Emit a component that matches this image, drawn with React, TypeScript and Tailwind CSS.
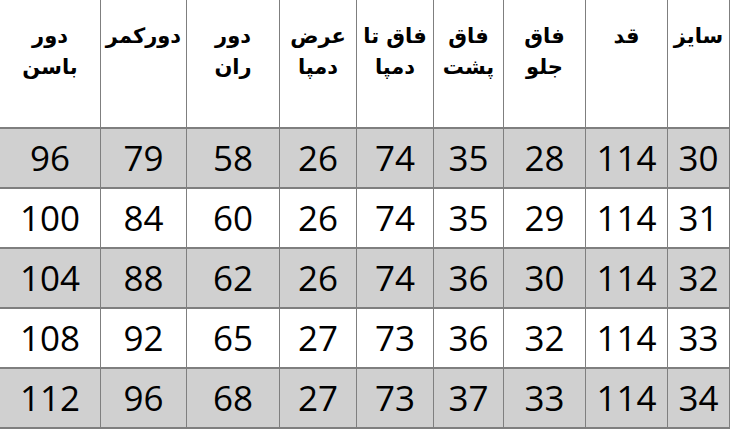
const headers = [
  ["سایز"],
  ["قد"],
  ["فاق", "جلو"],
  ["فاق", "پشت"],
  ["فاق تا", "دمپا"],
  ["عرض", "دمپا"],
  ["دور", "ران"],
  ["دورکمر"],
  ["دور", "باسن"],
];

const rows = [
  [30, 114, 28, 35, 74, 26, 58, 79, 96],
  [31, 114, 29, 35, 74, 26, 60, 84, 100],
  [32, 114, 30, 36, 74, 26, 62, 88, 104],
  [33, 114, 32, 36, 73, 27, 65, 92, 108],
  [34, 114, 33, 37, 73, 27, 68, 96, 112],
];

// border classes per column, right to left
const colBorder = (i: number) => {
  if (i === 0) return "border-l border-r border-[#7f7f7f]";
  if (i === 8) return "";
  return "border-l border-[#7f7f7f]";
};

const App = () => {
  return (
    <div className="w-[742px] h-[429px] bg-white overflow-hidden">
      <div
        dir="rtl"
        className="grid grid-cols-[63px_82px_82px_70px_77px_77px_93px_86px_100px] w-[730px]"
      >
        {headers.map((h, i) => (
          <div
            key={"h" + i}
            className={`h-[129px] border-b-2 border-b-[#7f7f7f] pt-[21px] flex flex-col items-center text-black font-bold text-[21px] leading-[31px] font-['DejaVu_Sans',sans-serif] ${colBorder(i)}`}
          >
            {h.map((line, j) => (
              <span key={j}>{line}</span>
            ))}
          </div>
        ))}
        {rows.map((row, r) =>
          row.map((v, i) => (
            <div
              key={r + "-" + i}
              className={`h-[60px] border-b-2 border-b-[#7f7f7f] flex items-center justify-center text-black text-[35px] font-['Open_Sans',sans-serif] ${
                r % 2 === 0 ? "bg-[#d0d0d0]" : "bg-white"
              } ${colBorder(i)}`}
            >
              <span dir="ltr">{v}</span>
            </div>
          )),
        )}
      </div>
    </div>
  );
};

export default App;
